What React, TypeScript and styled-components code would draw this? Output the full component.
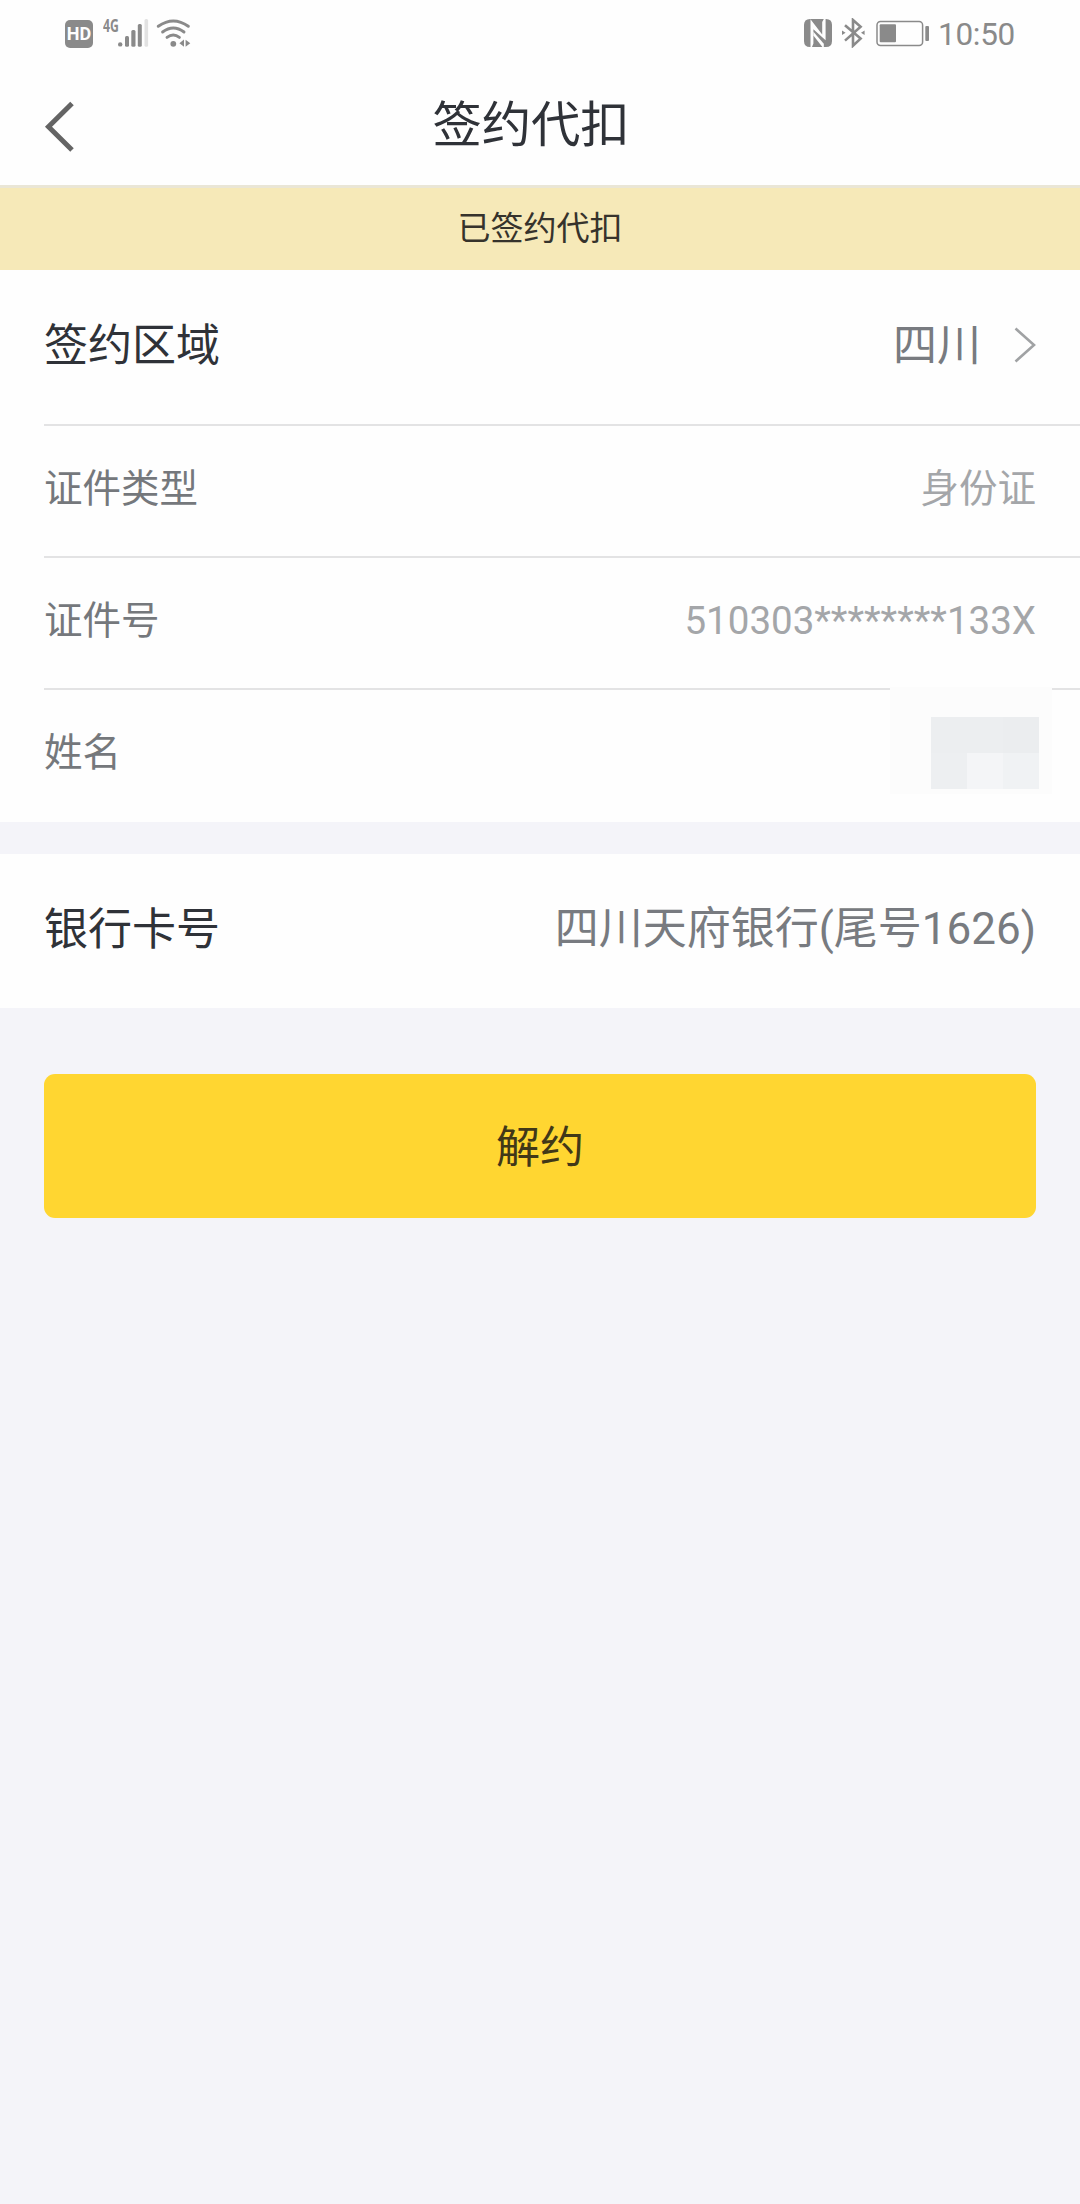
import React from "react";
import styled, { createGlobalStyle } from "styled-components";

const GlobalStyle = createGlobalStyle`
  *, *::before, *::after { box-sizing: border-box; }
  body {
    margin: 0;
    background: #f4f4f9;
    font-family: Roboto, "Noto Sans CJK SC", sans-serif;
  }
`;

const Screen = styled.div`
  display: flex;
  flex-direction: column;
  width: 1080px;
  min-height: 2204px;
  background: #f4f4f9;
`;

const StatusBar = styled.div`
  display: flex;
  justify-content: space-between;
  height: 66px;
  padding: 0 65px;
  background: #fefefe;
  color: #8a8a8a;
`;

const StatusGroup = styled.div`
  display: flex;
  align-items: flex-start;
  padding-top: 18px;
`;

const HdBadge = styled.span`
  width: 28px;
  height: 28px;
  margin-top: 2px;
  border-radius: 5px;
  background: #8a8a8a;
  color: #fefefe;
  font: 700 18px/28px Roboto, sans-serif;
  text-align: center;
`;

const NetworkLabel = styled.span`
  width: 16px;
  margin: 1px 0 0 10px;
  font: 700 17px/14px "Open Sans", Roboto, sans-serif;
  transform: scaleX(0.72);
  transform-origin: left;
`;

const StatusIcon = styled.svg<{ $gap: number }>`
  flex: none;
  margin-left: ${(p) => p.$gap}px;
`;

const Clock = styled.span`
  width: 77px;
  margin-left: 8px;
  padding-top: 1px;
  font-size: 31.5px;
  line-height: 32px;
  letter-spacing: -0.3px;
  white-space: nowrap;
`;

const Header = styled.header`
  display: grid;
  grid-template-columns: 120px 1fr 120px;
  height: 119px;
  padding-right: 18px;
  background: #fefefe;
`;

const BackButton = styled.button`
  display: flex;
  padding: 35px 0 0 44px;
  border: 0;
  background: none;
`;

const Title = styled.h1`
  margin: 0;
  padding-top: 23px;
  color: #2f3238;
  font-size: 49.3px;
  font-weight: 400;
  line-height: 72px;
  text-align: center;
`;

const Banner = styled.div`
  height: 85px;
  padding-top: 17px;
  border-top: 3px solid #eae6d6;
  background: #f6e9b8;
  color: #36332c;
  font-size: 33px;
  line-height: 48px;
  text-align: center;
`;

const Section = styled.section<{ $gap?: number }>`
  display: flex;
  flex-direction: column;
  margin-bottom: ${(p) => p.$gap ?? 0}px;
  padding-left: 44px;
  background: #fefefe;
`;

const Row = styled.div<{ $height: number; $large?: boolean; $divided?: boolean }>`
  display: flex;
  align-items: center;
  justify-content: space-between;
  height: ${(p) => p.$height}px;
  padding: 0 44px ${(p) => (p.$large ? 2 : p.$divided ? 4 : 6)}px 0;
  border-bottom: ${(p) => (p.$divided ? "2px solid #e3e3e4" : "0")};
  font-size: ${(p) => (p.$large ? 44 : 38.5)}px;
  line-height: 64px;
`;

const Label = styled.span<{ $strong?: boolean }>`
  color: ${(p) => (p.$strong ? "#2f3238" : "#75787c")};
`;

const Value = styled.span<{ $muted?: boolean }>`
  display: flex;
  align-items: center;
  color: ${(p) => (p.$muted ? "#a4a6a9" : "#787b80")};
`;

const BankValue = styled(Value)`
  padding-bottom: 2px;
`;

const Chevron = styled.svg`
  margin: 0 0 2px 33px;
`;

const Mosaic = styled.div`
  position: relative;
  display: grid;
  grid-template-columns: repeat(3, 36px);
  grid-template-rows: repeat(2, 36px);
  margin: 0 -3px 1px 0;
  z-index: 0;
`;

const MosaicVeil = styled.div`
  position: absolute;
  z-index: -1;
  left: -41px;
  top: -30px;
  width: 162px;
  height: 107px;
  background: #fcfcfc;
`;

const MosaicCell = styled.span<{ $tone: string }>`
  background: ${(p) => p.$tone};
`;

const Actions = styled.div`
  padding: 66px 44px;
`;

const PrimaryButton = styled.button`
  display: block;
  width: 100%;
  height: 144px;
  padding: 4px 0 0;
  border: 0;
  border-radius: 11px;
  background: #ffd631;
  color: #413818;
  font-family: inherit;
  font-size: 44px;
  line-height: 64px;
`;

const mosaicTones = ["#eceef0", "#eceef0", "#ebedef", "#edeff1", "#f4f5f7", "#f0f2f4"];

function SignalIcon() {
  return (
    <StatusIcon $gap={-1} width="31" height="30" viewBox="118 18 31 30" fill="#8a8a8a">
      <circle cx="120.2" cy="44.4" r="2.2" />
      <rect x="125" y="36" width="4" height="10.7" rx="1.5" />
      <rect x="131.3" y="30" width="4.2" height="16.7" rx="1.5" />
      <rect x="137.8" y="24" width="4" height="22.7" rx="1.5" />
      <rect x="144.5" y="19" width="3.6" height="27.7" rx="1.5" fill="#e2e2e2" />
    </StatusIcon>
  );
}

function WifiIcon() {
  return (
    <StatusIcon $gap={7} width="36" height="30" viewBox="156 18 36 30" fill="none">
      <g stroke="#8a8a8a" strokeWidth="2.9" strokeLinecap="round">
        <path d="M158.3 26.3 Q173.3 15.5 188.3 26.3" />
        <path d="M162.6 32 Q173.3 23.8 184 32" />
        <path d="M167 37.4 Q173.3 32.4 179.4 37.4" />
      </g>
      <circle cx="173.3" cy="43.8" r="2.9" fill="#8a8a8a" />
      <path d="M179.4 43.2 L184 39.6 V46.8 Z M185.6 39.8 L190.3 43.2 L185.6 46.8 Z" fill="#8a8a8a" />
    </StatusIcon>
  );
}

function NfcIcon() {
  return (
    <StatusIcon $gap={0} width="30" height="30" viewBox="0 0 30 30">
      <path d="M7 1H23Q29 1 29 7V23Q29 29 23 29H7Q1 29 1 23V7Q1 1 7 1Z" fill="#8a8a8a" />
      <path d="M7.5 1.2L19.2 16.5V4L20.8 1H22.6V22.2L10.4 11.2V25.6L9 29H7.5Z" fill="#fefefe" />
      <path d="M10.4 13.8L20.8 25.8V29.2H19.6L10.4 17.5Z" fill="#fefefe" />
    </StatusIcon>
  );
}

function BluetoothIcon() {
  return (
    <StatusIcon $gap={8} width="24" height="30" viewBox="0 0 24 30" fill="none">
      <path d="M4 7.2L19.6 20.6L12 27.7V2L19.6 8.8L4 22.6" stroke="#8a8a8a" strokeWidth="2.6" />
      <path d="M1 12.6L4.6 14.8L1 17Z M23.6 12.6L20 14.8L23.6 17Z" fill="#8a8a8a" />
    </StatusIcon>
  );
}

function BatteryIcon() {
  return (
    <StatusIcon $gap={11} width="54" height="30" viewBox="876 18 54 30">
      <rect x="877" y="21.5" width="45.6" height="24" rx="3.5" fill="none" stroke="#8a8a8a" strokeWidth="1.5" />
      <rect x="879.7" y="24.3" width="16.3" height="18" rx="1" fill="#8a8a8a" />
      <rect x="925.3" y="26" width="3.7" height="15" rx="1" fill="#8a8a8a" />
    </StatusIcon>
  );
}

export default function App() {
  return (
    <Screen>
      <GlobalStyle />
      <StatusBar>
        <StatusGroup>
          <HdBadge>HD</HdBadge>
          <NetworkLabel>4G</NetworkLabel>
          <SignalIcon />
          <WifiIcon />
        </StatusGroup>
        <StatusGroup>
          <NfcIcon />
          <BluetoothIcon />
          <BatteryIcon />
          <Clock>10:50</Clock>
        </StatusGroup>
      </StatusBar>
      <Header>
        <BackButton aria-label="返回">
          <svg width="32" height="52" viewBox="0 0 32 52" fill="none">
            <path d="M28 2.5L4.5 25.8L28 49" stroke="#646464" strokeWidth="5" />
          </svg>
        </BackButton>
        <Title>签约代扣</Title>
      </Header>
      <Banner>已签约代扣</Banner>
      <Section $gap={32}>
        <Row $height={156} $large $divided>
          <Label $strong>签约区域</Label>
          <Value>
            四川
            <Chevron width="22" height="36" viewBox="0 0 22 36" fill="none">
              <path d="M1.5 1.5L20 18L1.5 34.5" stroke="#a0a2a4" strokeWidth="2.6" />
            </Chevron>
          </Value>
        </Row>
        <Row $height={132} $divided>
          <Label>证件类型</Label>
          <Value $muted>身份证</Value>
        </Row>
        <Row $height={132} $divided>
          <Label>证件号</Label>
          <Value $muted>510303********133X</Value>
        </Row>
        <Row $height={132}>
          <Label>姓名</Label>
          <Mosaic>
            <MosaicVeil />
            {mosaicTones.map((tone, i) => (
              <MosaicCell key={i} $tone={tone} />
            ))}
          </Mosaic>
        </Row>
      </Section>
      <Section>
        <Row $height={154} $large>
          <Label $strong>银行卡号</Label>
          <BankValue>四川天府银行(尾号1626)</BankValue>
        </Row>
      </Section>
      <Actions>
        <PrimaryButton>解约</PrimaryButton>
      </Actions>
    </Screen>
  );
}
